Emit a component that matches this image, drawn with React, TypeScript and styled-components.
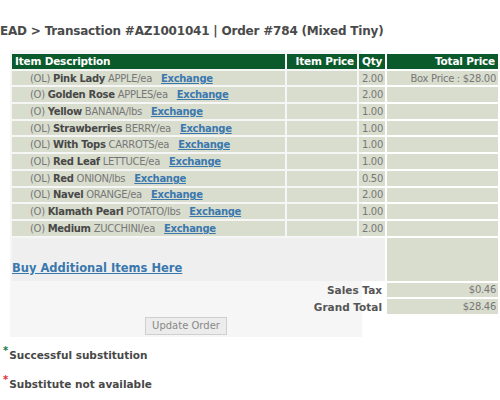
import React from "react";
import styled, { createGlobalStyle } from "styled-components";

const Global = createGlobalStyle`
  html, body { margin: 0; padding: 0; background: #fff; overflow: hidden; }
  body { font-family: "DejaVu Sans", Verdana, sans-serif; width: 500px; height: 400px; }
`;

const Page = styled.div`
  width: 500px;
  height: 400px;
  overflow: hidden;
`;

const Title = styled.h1`
  margin: 0;
  padding: 24px 0 0 0;
  height: 26px;
  font-size: 12px;
  font-weight: bold;
  color: #4a4a4a;
  white-space: nowrap;
  letter-spacing: -0.2px;
`;

const Panel = styled.div`
  margin-left: 10px;
  width: 352px;
  background: #f6f6f6;
  padding: 2px 0 2px 0;
  display: flex;
  flex-direction: column;
  align-items: center;
`;

const Table = styled.table`
  align-self: flex-start;
  border-collapse: separate;
  border-spacing: 2px;
  width: 490px;
  table-layout: fixed;
  font-size: 10px;
  letter-spacing: -0.3px;
  color: #777;
`;

const Th = styled.th<{ $align?: string; $w?: number }>`
  background: #0b5a2b;
  color: #fff;
  font-weight: bold;
  font-size: 10.5px;
  letter-spacing: -0.2px;
  text-align: ${(p) => p.$align || "left"};
  padding: 0 3px;
  height: 14.7px;
  width: ${(p) => (p.$w ? `${p.$w}px` : "auto")};
  white-space: nowrap;
`;

const Td = styled.td<{ $align?: string; $bg?: string; $pad?: string }>`
  background: ${(p) => p.$bg || "#d9ddce"};
  text-align: ${(p) => p.$align || "left"};
  padding: ${(p) => p.$pad || "0 2px"};
  height: 14.7px;
  white-space: nowrap;
  vertical-align: middle;
`;

const Bold = styled.b`
  color: #484848;
`;

const Exchange = styled.a`
  color: #3a78ae;
  font-weight: bold;
  text-decoration: underline;
  margin-left: 9px;
  cursor: pointer;
`;

const BuyLink = styled.a`
  display: inline-block;
  color: #3a78ae;
  font-weight: bold;
  font-size: 11.5px;
  letter-spacing: 0;
  text-decoration: underline;
  padding: 23px 0 6px 0;
`;

const Label = styled.td`
  text-align: right;
  font-weight: bold;
  font-size: 10.5px;
  letter-spacing: 0;
  color: #555;
  padding: 0 3px;
  height: 14.7px;
`;

const Button = styled.button`
  margin-top: 1px;
  font-family: "DejaVu Sans", Verdana, sans-serif;
  font-size: 10px;
  color: #888;
  background: #ececec;
  border: 1px solid #cfcfcf;
  padding: 2px 6px;
  height: 18px;
`;

const Legend = styled.div`
  display: flex;
  flex-direction: column;
  gap: 16px;
  padding: 8px 0 0 3px;
`;

const LegendItem = styled.div`
  font-size: 10.5px;
  font-weight: bold;
  color: #484848;
  height: 13px;
`;

const Star = styled.sup<{ $c: string }>`
  color: ${(p) => p.$c};
  font-size: 10px;
  margin-right: 1px;
`;

type Item = { pre: string; bold: string; name: string; qty: string };
const items: Item[] = [
  { pre: "(OL)", bold: "Pink Lady", name: "APPLE/ea", qty: "2.00" },
  { pre: "(O)", bold: "Golden Rose", name: "APPLES/ea", qty: "2.00" },
  { pre: "(O)", bold: "Yellow", name: "BANANA/lbs", qty: "1.00" },
  { pre: "(OL)", bold: "Strawberries", name: "BERRY/ea", qty: "1.00" },
  { pre: "(OL)", bold: "With Tops", name: "CARROTS/ea", qty: "1.00" },
  { pre: "(OL)", bold: "Red Leaf", name: "LETTUCE/ea", qty: "1.00" },
  { pre: "(OL)", bold: "Red", name: "ONION/lbs", qty: "0.50" },
  { pre: "(OL)", bold: "Navel", name: "ORANGE/ea", qty: "2.00" },
  { pre: "(O)", bold: "Klamath Pearl", name: "POTATO/lbs", qty: "1.00" },
  { pre: "(O)", bold: "Medium", name: "ZUCCHINI/ea", qty: "2.00" },
];

export default function App() {
  return (
    <Page>
      <Global />
      <Title>EAD &gt; Transaction #AZ1001041 | Order #784 (Mixed Tiny)</Title>
      <Panel>
        <Table>
          <thead>
            <tr>
              <Th $w={267}>Item Description</Th>
              <Th $w={64} $align="right">Item Price</Th>
              <Th $w={20}>Qty</Th>
              <Th $align="right">Total Price</Th>
            </tr>
          </thead>
          <tbody>
            {items.map((it, i) => (
              <tr key={i}>
                <Td $pad="0 3px 0 18px">
                  {it.pre} <Bold>{it.bold}</Bold> {it.name}
                  <Exchange>Exchange</Exchange>
                </Td>
                <Td />
                <Td $align="right">{it.qty}</Td>
                <Td $align="right">{i === 0 ? "Box Price : $28.00" : ""}</Td>
              </tr>
            ))}
            <tr>
              <Td colSpan={3} $bg="#efefef" $pad="0">
                <BuyLink>Buy Additional Items Here</BuyLink>
              </Td>
              <Td />
            </tr>
            <tr>
              <Label colSpan={3}>Sales Tax</Label>
              <Td $align="right">$0.46</Td>
            </tr>
            <tr>
              <Label colSpan={3}>Grand Total</Label>
              <Td $align="right">$28.46</Td>
            </tr>
          </tbody>
        </Table>
        <Button>Update Order</Button>
      </Panel>
      <Legend>
        <LegendItem>
          <Star $c="#1a7a4a">*</Star>Successful substitution
        </LegendItem>
        <LegendItem>
          <Star $c="#e03030">*</Star>Substitute not available
        </LegendItem>
      </Legend>
    </Page>
  );
}
